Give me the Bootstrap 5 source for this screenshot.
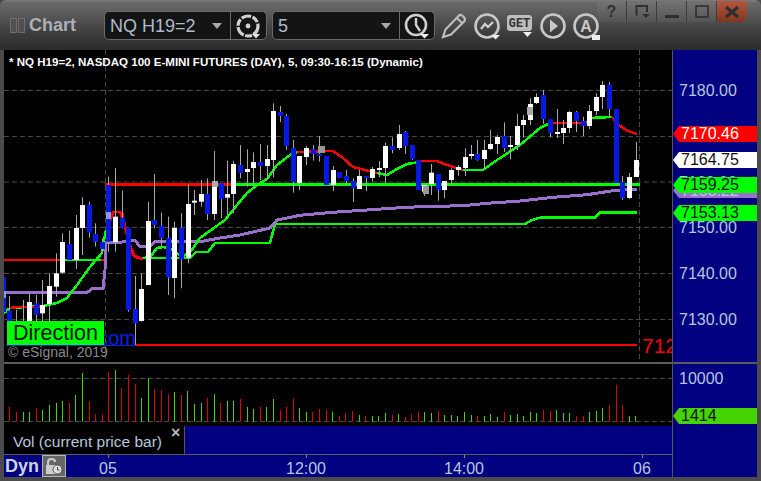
<!DOCTYPE html>
<html lang="en">
<head>
<meta charset="utf-8">
<title>Chart</title>
<link href="https://cdn.jsdelivr.net/npm/bootstrap@5.3.0/dist/css/bootstrap.min.css" rel="stylesheet">
<style>
html,body{margin:0;height:481px;width:761px;overflow:hidden;background:#4a4a4a}
body{font-family:"Liberation Sans",Arial,sans-serif;font-size:16px;line-height:1}
.win{width:761px;height:481px;background:#4b4b4b;padding:0 4px 4px}
.tbar{height:50px;margin:0 -4px;padding-left:10px;border-radius:6px 6px 0 0;background:linear-gradient(#7c7c7c 0,#686868 3px,#5a5a5a 14px,#3e3e3e 32px,#2c2c2c 50px);position:relative}
.brand{width:94px;height:50px;color:#aab1b9;font-weight:700;font-size:18px}
.pip{width:7px;height:15px;border:1px solid #6d6d6d;background:#505050;margin-right:1px}
.cmb{width:163px;height:29px;margin-top:11px;background:#141414;border:1px solid #6a6a6a;border-radius:5px;color:#aebccb;margin-right:5px;font-size:18px}
.cmb-t{width:109px;padding-left:5px}
.cmb-t2{width:113px;padding-left:5px}
.caret-d{width:0;height:0;border:5px solid transparent;border-top:6px solid #a8a8a8;border-bottom:0;margin-right:8px}
.cmb-i{width:37px;height:100%;border-left:1px solid #6a6a6a;margin-left:auto}
.tool{margin-top:11px;height:29px;width:33px;flex:none}
.tool-first{margin-left:-2px}
.wbtns{position:absolute;left:597px;top:1px;width:150px;height:21px;border-radius:0 0 6px 6px;overflow:hidden;background:linear-gradient(#747474,#545454)}
.wb{width:30px;height:21px;border-right:1px solid #3c3c3c;color:#2f2f2f;font-weight:700}
.wb:last-child{border:0;background:linear-gradient(#b5573f,#81361f)}
.stage{display:grid;grid-template-columns:668px 85px;grid-template-rows:312px 2px 62px 28px 23px;height:427px;width:753px}
.pane{background:#000;display:block;width:668px}
.axis{background:#000080;position:relative;grid-row:1 / 6;grid-column:2;border-left:1px solid #555}
.sep{background:#5a5a5a;grid-column:1}
.sep2{position:absolute;left:0;right:0;top:312px;height:2px;background:#5a5a5a}
.lbl{position:absolute;left:6px;color:#b4c8e0;font-size:16px;height:16px;line-height:16px}
.tagx{position:absolute;left:0;width:84px;height:16px;line-height:16px;padding-left:8px;font-size:16px;clip-path:polygon(0 50%,6px 0,100% 0,100% 100%,6px 100%)}
.t-red{background:#ff0000;color:#fff}
.t-white{background:#fff;color:#111}
.t-green{background:#00ff00;color:#111}
.t-pur{background:#9a70cc;color:#b4c8e0;height:15px}
.t-vol{background:#44d400;color:#111}
.chartwrap{position:relative;grid-column:1;grid-row:1;height:312px;overflow:hidden}
.dirbox{position:absolute;left:3px;top:271px;width:97px;height:24px;background:#00ff00;color:#111;font-size:21.5px;line-height:24px;padding-left:6px}
.dotcom{position:absolute;left:86px;top:278px;width:46px;color:#0a1ee6;font-size:20px;line-height:20px;text-align:right}
.ulin{position:absolute;left:2px;top:295px;width:130px;height:1px;background:#0a1ee6}
.legend{grid-column:1;background:#000;color:#b7c7dc;position:relative}
.legend-t{width:180px;padding:8px 0 0 9px;position:relative;font-size:15.5px}
.legend-x{position:absolute;left:167px;top:-1px;font-weight:700;color:#bbb;font-size:16px}
.legend-b{flex:1;background:#000080;border-left:1px solid #555}
.xaxis{grid-column:1;background:#000080;border-top:1px solid #5a5a5a;color:#b4c8e0;position:relative}
.dyn{font-weight:700;color:#ccd4e0;padding:2px 0 0 1px;width:38px;font-size:18px}
.lock{width:24px;height:22px;background:#666;border:1px solid #b5b5b5}
.xt{position:absolute;top:6px;transform:translateX(-50%);line-height:16px}
.xt::before{content:"";position:absolute;left:50%;top:-6px;width:1px;height:3px;background:#8a8a8a}
polyline{shape-rendering:crispEdges}
</style>
</head>
<body>
<div class="win">
  <div class="tbar d-flex">
    <div class="brand d-flex align-items-center"><span class="pip"></span><span class="pip me-1"></span>Chart</div>
    <div class="cmb d-flex align-items-center">
      <div class="cmb-t">NQ H19=2</div><span class="caret-d"></span>
      <div class="cmb-i d-flex align-items-center justify-content-center">
        <svg width="26" height="26" viewBox="0 0 26 26"><circle cx="13" cy="13" r="10" fill="none" stroke="#d0d0d0" stroke-width="3.200" stroke-dasharray="10 1.500 7 1.500"/><circle cx="13" cy="13" r="2.400" fill="#d0d0d0"/><path d="M17 21h8l-4 4.500z" fill="#e4e4e4"/></svg>
      </div>
    </div>
    <div class="cmb d-flex align-items-center">
      <div class="cmb-t2">5</div><span class="caret-d"></span>
      <div class="cmb-i d-flex align-items-center justify-content-center">
        <svg width="26" height="26" viewBox="0 0 26 26"><circle cx="12" cy="12" r="10" fill="none" stroke="#d0d0d0" stroke-width="2.600"/><path d="M12 5v7l4 6" fill="none" stroke="#d0d0d0" stroke-width="2.400"/><path d="M16 21h9l-4.500 4.500z" fill="#eee"/></svg>
      </div>
    </div>
    <div class="tool tool-first d-flex align-items-center justify-content-center">
      <svg width="27" height="27" viewBox="0 0 27 27"><path d="M2 25l2.500-7.500L18 3.500c2-2 7.500 3 5.500 5.500L10 22.500z" fill="none" stroke="#bdbdbd" stroke-width="2.200"/><path d="M16 6l5.500 5.500" stroke="#bdbdbd" stroke-width="2"/></svg>
    </div>
    <div class="tool d-flex align-items-center justify-content-center">
      <svg width="30" height="28" viewBox="0 0 30 28"><circle cx="14" cy="14" r="11.500" fill="none" stroke="#c8c8c8" stroke-width="2.600"/><path d="M8 17l4-5 3 3 5-5" fill="none" stroke="#d0d0d0" stroke-width="2.200"/><path d="M18 23h9l-4.500 4.500z" fill="#eee"/></svg>
    </div>
    <div class="tool d-flex align-items-center justify-content-center" style="width:32px">
      <svg width="28" height="24" viewBox="0 0 28 24"><rect x="1" y="1" width="25" height="16" rx="3" fill="#bdbdbd"/><text x="13.500" y="13" text-anchor="middle" font-family="Liberation Mono" font-size="12" font-weight="700" fill="#333">GET</text><path d="M17 18h9l-4.500 5z" fill="#eee"/></svg>
    </div>
    <div class="tool d-flex align-items-center justify-content-center">
      <svg width="28" height="28" viewBox="0 0 28 28"><circle cx="14" cy="14" r="11.500" fill="none" stroke="#c8c8c8" stroke-width="2.600"/><path d="M11 7.500l8 6.500-8 6.500z" fill="#c8c8c8"/></svg>
    </div>
    <div class="tool d-flex align-items-center justify-content-center">
      <svg width="28" height="28" viewBox="0 0 28 28"><circle cx="14" cy="14" r="11.500" fill="none" stroke="#c8c8c8" stroke-width="2.600"/><text x="14" y="20" text-anchor="middle" font-family="Liberation Sans" font-size="16" font-weight="700" fill="#c8c8c8">A</text><path d="M20 23h8v5h-8z" fill="#eee"/></svg>
    </div>
    <div class="wbtns d-flex">
      <div class="wb d-flex align-items-center justify-content-center">?</div>
      <div class="wb d-flex align-items-center justify-content-center"><svg width="16" height="15" viewBox="0 0 16 15"><path d="M2.500 11.500V2H13v6" fill="none" stroke="#2f2f2f" stroke-width="2"/><path d="M8 10h8l-4 4z" fill="#2f2f2f"/></svg></div>
      <div class="wb d-flex align-items-center justify-content-center"><svg width="14" height="14" viewBox="0 0 14 14"><rect y="10" width="14" height="3" fill="#2f2f2f"/></svg></div>
      <div class="wb d-flex align-items-center justify-content-center"><svg width="14" height="13" viewBox="0 0 14 13"><rect x="1" y="1" width="12" height="11" fill="none" stroke="#2f2f2f" stroke-width="1.600"/></svg></div>
      <div class="wb d-flex align-items-center justify-content-center"><svg width="14" height="12" viewBox="0 0 14 12"><path d="M1 1l12 10M13 1L1 11" stroke="#2f2f2f" stroke-width="3.200"/></svg></div>
    </div>
  </div>

  <div class="stage">
    <div class="chartwrap">
      <svg id="main" class="pane" height="312" viewBox="4 50 668 312" xmlns="http://www.w3.org/2000/svg">
        <text x="9" y="66" font-family="Liberation Sans" font-size="11.550" font-weight="700" fill="#fff">* NQ H19=2, NASDAQ 100 E-MINI FUTURES (DAY), 5, 09:30-16:15 (Dynamic)</text>
        <text x="642" y="353" font-family="Liberation Sans" font-size="21" fill="#ff0000">7125.00</text>
        <text x="8" y="357" font-family="Liberation Sans" font-size="14" fill="#8a8a8a">© eSignal, 2019</text>
      </svg>
      <div class="ulin"></div>
      <div class="dotcom">.com</div>
      <div class="dirbox">Direction</div>
    </div>
    <div class="axis">
      <div class="lbl" style="top:33px">7180.00</div>
      <div class="lbl" style="top:125px">7160.00</div>
      <div class="lbl" style="top:170px">7150.00</div>
      <div class="lbl" style="top:216px">7140.00</div>
      <div class="lbl" style="top:262px">7130.00</div>
      <div class="tagx t-pur" style="top:133px">7158.22</div>
      <div class="tagx t-red" style="top:76px">7170.46</div>
      <div class="tagx t-white" style="top:102px">7164.75</div>
      <div class="tagx t-green" style="top:127px">7159.25</div>
      <div class="tagx t-green" style="top:155px">7153.13</div>
      <div class="sep2"></div>
      <div class="lbl" style="top:321px">10000</div>
      <div class="tagx t-vol" style="top:358px">1414</div>
    </div>
    <div class="sep"></div>
    <svg id="vol" class="pane" height="62" viewBox="4 364 668 62" xmlns="http://www.w3.org/2000/svg"></svg>
    <div class="legend d-flex">
      <div class="legend-t">Vol (current price bar)<span class="legend-x">×</span></div>
      <div class="legend-b"></div>
    </div>
    <div class="xaxis d-flex">
      <div class="dyn">Dyn</div>
      <div class="lock d-flex align-items-center justify-content-center">
        <svg width="18" height="18" viewBox="0 0 18 18"><path d="M3 8V5c0-4 7-4 7 0" fill="none" stroke="#ccc" stroke-width="2"/><rect x="1" y="8" width="11" height="9" fill="#ccc"/><circle cx="12.500" cy="12.500" r="4.500" fill="#ddd" stroke="#555"/><path d="M12.500 10v3h2" fill="none" stroke="#444"/></svg>
      </div>
      <div class="xt" style="left:104px">05</div>
      <div class="xt" style="left:302px">12:00</div>
      <div class="xt" style="left:460px">14:00</div>
      <div class="xt" style="left:638px">06</div>
    </div>
  </div>
</div>
<script src="https://cdn.jsdelivr.net/npm/bootstrap@5.3.0/dist/js/bootstrap.bundle.min.js"></script>
<script>
const NS="http://www.w3.org/2000/svg";
function el(p,t,a,first){const e=document.createElementNS(NS,t);for(const k in a)e.setAttribute(k,a[k]);if(first)p.insertBefore(e,first);else p.appendChild(e);return e;}
const main=document.getElementById('main'),vol=document.getElementById('vol');
const anchor=main.firstElementChild;
[90.5,136.5,182,227.5,273.5,319.5].forEach(y=>el(main,'line',{x1:4,x2:672,y1:y,y2:y,stroke:'#484848','stroke-dasharray':'5 3'},anchor));
[105.5,639.5].forEach(x=>el(main,'line',{x1:x,x2:x,y1:50,y2:362,stroke:'#484848','stroke-dasharray':'5 3'},anchor));
function pl(pts,c,w){el(main,'polyline',{points:pts.map(p=>p.join(',')).join(' '),fill:'none',stroke:c,'stroke-width':w||2.5},anchor);}
pl([[4,260],[105,260]],'#ff0000');
pl([[105,184.700],[640,184.700]],'#ff0000');
pl([[136,345],[637,345]],'#ff0000',2);
pl([[60,260],[101,260]],'#00ff00');
pl([[235,184.700],[640,184.700]],'#00ff00');
pl([[140,258],[190,258],[196,252],[208,252],[215,243],[270,243],[275,224],[525,224],[532,220],[540,217.700],[595,217.700],[600,212.700],[637,212.700]],'#00ff00');
pl([[4,292],[88,292],[92,289],[103,288.700],[105,270],[106,242],[122,242],[130,240],[135,240],[140,246.700],[150,246.700],[155,241.700],[200,241.700],[220,238],[240,235],[270,228],[277,220],[300,215.300],[333,212.300],[367,210],[400,207.700],[420,206.700],[463,205.700],[487,203.300],[520,201],[553,197.300],[587,194.700],[613,190.700],[637,189.300]],'#9a70cc',3);
pl([[106,235],[113,212],[120,212],[125,227],[130,245],[135,257],[143,259]],'#ff0000');
pl([[122,212],[127,235],[133,255],[140,258]],'#ff0000');
pl([[4,313],[10,308],[43,306],[57,303],[67,298],[77,285],[90,267],[102,253],[105,235],[106,230]],'#00ff00');
pl([[10,308],[18,307],[33,307],[43,306]],'#ff0000');
pl([[143,258],[150,257],[157,248],[163,247],[173,250],[182,257],[192,250],[200,238],[225,220],[237,205],[247,193],[257,185],[267,179],[277,165],[290,155],[297,152]],'#00ff00');
pl([[297,152],[333,151],[343,158],[353,167],[373,172],[377,173]],'#ff0000');
pl([[377,173],[387,175],[397,169],[407,164],[420,162]],'#00ff00');
pl([[420,161],[437,161],[447,165],[457,168],[463,170]],'#ff0000');
pl([[463,170],[483,170],[497,160],[520,145],[540,128],[550,123]],'#00ff00');
pl([[550,123],[587,123]],'#ff0000');
pl([[587,122],[590,118],[612,117]],'#00ff00');
pl([[612,117],[620,126],[628,131],[637,134]],'#ff0000');
const Z3=[[28,422,465,378,490,'b'],[48,465,477,420,490,'b'],[70,453,483,390,490,'w'],[88,396,453,370,490,'w'],[108,400,435,375,490,'b'],[127,405,430,330,470,'w'],[148,348,402,310,460,'w'],[168,310,350,250,380,'w'],[187,216,308,190,310,'w'],[208,222,270,182,272,'b'],[227,174,270,135,297,'w'],[247,105,174,82,255,'w'],[268,105,188,95,203,'b'],[286,192,216,160,230,'b'],[307,216,237,205,250,'b'],[325,45,215,20,245,'b'],[346,140,216,-6,245,'w'],[365,143,173,62,175,'b'],[385,174,420,174,425,'b'],[405,417,460,318,525,'b'],[424,357,453,310,455,'w'],[445,153,345,95,345,'w'],[463,150,165,12,175,'b'],[484,167,204,128,232,'b'],[505,204,322,140,375,'b'],[523,174,324,155,385,'w'],[544,173,268,130,355,'b'],[563,102,263,42,280,'w'],[583,92,98,60,135,'w']];
const Z4=[[3,312,335,270,350,'w'],[22,312,372,265,390,'b'],[42,280,372,183,390,'w'],[62,280,327,280,385,'b'],[82,312,323,212,375,'w'],[100,222,312,212,370,'w'],[121,225,249,165,265,'b'],[142,237,246,178,290,'w'],[160,216,234,187,290,'w'],[181,216,228,162,270,'b'],[200,207,228,165,270,'w'],[220,63,210,40,262,'w'],[241,66,78,48,96,'b'],[259,78,168,72,180,'b'],[280,174,276,150,308,'b'],[298,198,279,198,300,'w'],[319,174,201,168,225,'w'],[338,178,192,165,212,'b'],[358,192,198,138,215,'b'],[379,198,285,198,288,'b'],[398,240,285,228,303,'w'],[418,246,264,246,264,'b'],[437,258,273,240,285,'b'],[458,273,294,265,336,'b'],[478,258,297,240,297,'w'],[497,258,264,258,303,'b'],[517,237,264,231,275,'w'],[536,234,240,213,262,'w'],[556,168,234,158,280,'w'],[577,168,180,142,190,'b'],[596,132,174,105,180,'w'],[616,126,168,123,192,'b'],[635,165,207,165,210,'b'],[655,210,300,210,300,'b']];
const Z5=[[13,345,365,345,378,'w'],[33,308,342,282,375,'w'],[55,312,360,312,392,'b'],[73,333,360,333,385,'w'],[94,300,330,295,345,'w'],[113,291,300,285,318,'w'],[134,261,294,235,318,'w'],[154,252,258,225,268,'w'],[172,252,270,210,272,'b'],[193,240,267,210,295,'w'],[211,222,237,180,240,'w'],[232,201,222,195,252,'w'],[253,198,234,157,246,'b'],[271,225,231,198,268,'w'],[292,168,225,132,240,'w'],[310,150,165,135,203,'w'],[331,102,150,85,165,'w'],[349,81,99,70,102,'w'],[370,75,147,60,162,'b'],[391,147,189,147,202,'b'],[410,186,192,117,204,'w'],[430,174,189,150,222,'w'],[448,126,174,123,189,'w'],[469,126,153,123,186,'b'],[490,153,168,140,198,'b'],[508,123,168,105,177,'w'],[529,81,123,70,135,'w'],[547,45,81,33,117,'w'],[568,45,117,36,140,'b'],[589,117,339,117,345,'b'],[607,336,384,318,390,'b'],[628,321,384,309,387,'w'],[647,270,321,216,321,'w']];
function candles(arr,ox,oy){arr.forEach(c=>{const x=Math.round(ox+c[0]/3),t=oy+c[1]/3,b=oy+c[2]/3,wt=oy+c[3]/3,wb=oy+c[4]/3;
 el(main,'rect',{x:x,y:wt,width:1,height:wb-wt,fill:'#a8a8a8'},anchor);
 el(main,'rect',{x:x-2,y:t,width:5,height:b-t,fill:c[5]=='w'?'#fff':'#0519e4'},anchor);});}
candles(Z3,0,170);candles(Z4,200,90);candles(Z5,420,70);
el(main,'rect',{x:4,y:277,width:2,height:35,fill:'#0519e4'},anchor);
[[4,291,2,7,'#8f96ef'],[106,212,5,7,'#8f96ef'],[212,181,6,6,'#aaa'],[318,146,7,7,'#999'],[423,186,6,8,'#999'],[527,107,6,8,'#aaa']].forEach(r=>el(main,'rect',{x:r[0],y:r[1],width:r[2],height:r[3],fill:r[4]},anchor));
[378.5,421.5].forEach(y=>el(vol,'line',{x1:4,x2:672,y1:y,y2:y,stroke:'#484848','stroke-dasharray':'5 3'}));
const V6=[[28,201,'r'],[49,216,'r'],[70,216,'g'],[88,216,'g'],[108,204,'r'],[127,210,'g'],[148,195,'g'],[168,189,'g'],[187,183,'g'],[208,189,'r'],[227,165,'g'],[247,99,'g'],[268,183,'r'],[286,222,'r'],[307,222,'r'],[325,96,'r'],[346,90,'g'],[365,144,'r'],[385,105,'r'],[405,132,'r'],[424,174,'g'],[445,114,'g'],[463,147,'r'],[484,150,'r'],[505,162,'r'],[523,156,'g'],[544,165,'r'],[563,153,'g'],[583,192,'g'],[604,189,'g'],[622,174,'r'],[643,162,'g'],[661,189,'r'],[682,183,'g'],[700,183,'g'],[721,177,'r'],[742,201,'g'],[760,207,'g'],[781,201,'r'],[799,201,'g'],[820,177,'g'],[841,210,'r'],[859,201,'r'],[880,174,'r'],[898,204,'g'],[919,216,'g'],[937,216,'r'],[958,207,'r'],[979,210,'r'],[997,216,'g'],[1018,228,'r'],[1037,219,'r'],[1057,213,'r'],[1078,225,'g'],[1096,228,'r'],[1117,228,'g'],[1135,228,'g']];
const V7=[[15,219,'g'],[37,225,'r'],[55,222,'g'],[76,231,'r'],[94,222,'r'],[115,216,'r'],[133,216,'g'],[154,219,'g'],[175,213,'r'],[193,225,'g'],[214,225,'g'],[232,228,'g'],[253,216,'g'],[274,225,'g'],[292,228,'r'],[313,228,'g'],[331,222,'g'],[352,231,'g'],[373,216,'r'],[391,225,'g'],[412,222,'g'],[430,228,'g'],[451,216,'g'],[469,219,'g'],[490,210,'r'],[511,213,'r'],[529,210,'g'],[550,219,'g'],[568,219,'g'],[589,228,'r'],[610,228,'r'],[628,216,'g'],[649,213,'g'],[667,204,'g'],[688,195,'r'],[709,135,'r'],[727,195,'r'],[748,228,'g'],[766,228,'g']];
function bars(a,ox){a.forEach(b=>{const x=Math.floor(ox+b[0]/3),t=340+b[1]/3;el(vol,'rect',{x:x,y:t,width:1,height:421.700-t,fill:b[2]=='r'?'#e00000':'#44d400'});});}
bars(V6,0);bars(V7,380);
</script>
</body>
</html>
